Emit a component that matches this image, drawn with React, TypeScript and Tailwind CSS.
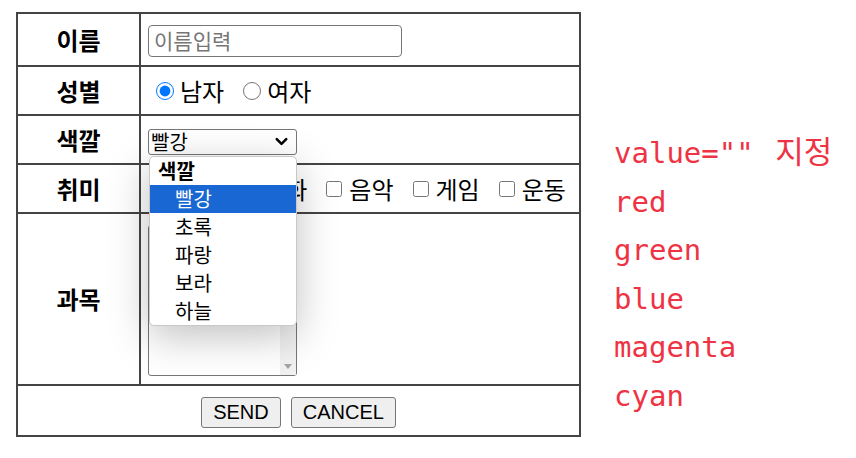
import { ChevronDown } from "lucide-react";

const kr = "font-['Noto_Sans_CJK_KR','Noto_Sans',sans-serif]";

const hobbies = ["독서", "영화", "음악", "게임", "운동"];
const colors = ["빨강", "초록", "파랑", "보라", "하늘"];
const notes = ["red", "green", "blue", "magenta", "cyan"];

function Label({ children }: { children: string }) {
  return (
    <div className="flex items-center justify-center bg-white text-[24px] font-bold text-black">
      {children}
    </div>
  );
}

function ColorSelect() {
  return (
    <div className="relative">
      <div className="flex h-[26px] w-[149px] items-center justify-between rounded-[3px] border border-[#767676] bg-white pl-[2px] pr-[5px] text-[20px] leading-none">
        <span>빨강</span>
        <ChevronDown className="h-[19px] w-[19px] text-black" strokeWidth={3.2} />
      </div>
      {/* open dropdown popup */}
      <div className="absolute left-[1px] top-[27px] z-10 w-[148px] overflow-hidden rounded-[5px] border border-[#c8c8c8] bg-white text-[20px] shadow-[0_10px_40px_rgba(0,0,0,0.25)]">
        <div className="flex h-[28px] items-center pl-[8px] font-bold">색깔</div>
        {colors.map((c, i) => (
          <div
            key={c}
            className={`flex h-[28px] items-center pl-[25px] ${i === 0 ? "bg-[#1967d2] text-white" : "text-black"}`}
          >
            {c}
          </div>
        ))}
      </div>
    </div>
  );
}

export default function App() {
  return (
    <div className={`flex items-start bg-white pl-[16px] pt-[12px] ${kr}`}>
      <div className="grid w-[565px] grid-cols-[121px_438px] grid-rows-[51px_47px_47px_47px_170px_49px] gap-[2px] border-2 border-[#444] bg-[#444]">
        <Label>이름</Label>
        <div className="flex items-center bg-white pl-[7px] pt-[3px]">
          <div className="flex h-[32px] w-[254px] items-center rounded-[4px] border border-[#767676] pl-[5px] text-[21px] text-[#767676]">
            이름입력
          </div>
        </div>

        <Label>성별</Label>
        <div className="flex items-center whitespace-nowrap bg-white pl-[15px] text-[24px]">
          <input type="radio" name="g" defaultChecked className="m-0 h-[18px] w-[18px] accent-[#0075ff]" />
          <span className="ml-[6px]">남자</span>
          <input type="radio" name="g" className="m-0 ml-[19px] h-[18px] w-[18px]" />
          <span className="ml-[6px]">여자</span>
        </div>

        <Label>색깔</Label>
        <div className="flex items-center bg-white pl-[7px] pt-[4px]">
          <ColorSelect />
        </div>

        <Label>취미</Label>
        <div className="flex items-center gap-[19px] whitespace-nowrap bg-white pl-[13px] text-[24px]">
          {hobbies.map((h) => (
            <label key={h} className="flex shrink-0 items-center">
              <input type="checkbox" className="m-0 h-[16px] w-[16px]" />
              <span className="ml-[7px]">{h}</span>
            </label>
          ))}
        </div>

        <Label>과목</Label>
        <div className="flex items-center bg-white pl-[7px] pt-[3px]">
          <div className="flex h-[151px] w-[149px] justify-end rounded-[3px] border border-[#767676] bg-white">
            <div className="flex w-[16px] flex-col items-center justify-end bg-[#f1f1f1] pb-[6px]">
              <div className="h-0 w-0 border-x-[4px] border-t-[5px] border-x-transparent border-t-[#a3a3a3]" />
            </div>
          </div>
        </div>

        <div className="col-span-2 flex items-center justify-center gap-[10px] bg-white pt-[3px] font-['Liberation_Sans',Arial,sans-serif]">
          <button className="h-[31px] rounded-[3px] border border-[#767676] bg-[#efefef] px-[11px] text-[20px] leading-none text-black">
            SEND
          </button>
          <button className="h-[31px] rounded-[3px] border border-[#767676] bg-[#efefef] px-[11px] text-[20px] leading-none text-black">
            CANCEL
          </button>
        </div>
      </div>

      <div className="ml-[33px] mt-[117px] flex flex-col font-['DejaVu_Sans_Mono','Noto_Sans_CJK_KR',monospace] text-[29px] leading-[48.6px] text-[#ee3344]">
        <div className="h-[48.6px] whitespace-pre">
          {'value="" '}
          <span className="ml-[4px] font-['Noto_Sans_CJK_KR',sans-serif] text-[31px] leading-none">지정</span>
        </div>
        {notes.map((n) => (
          <div key={n} className="whitespace-pre">
            {n}
          </div>
        ))}
      </div>
    </div>
  );
}
